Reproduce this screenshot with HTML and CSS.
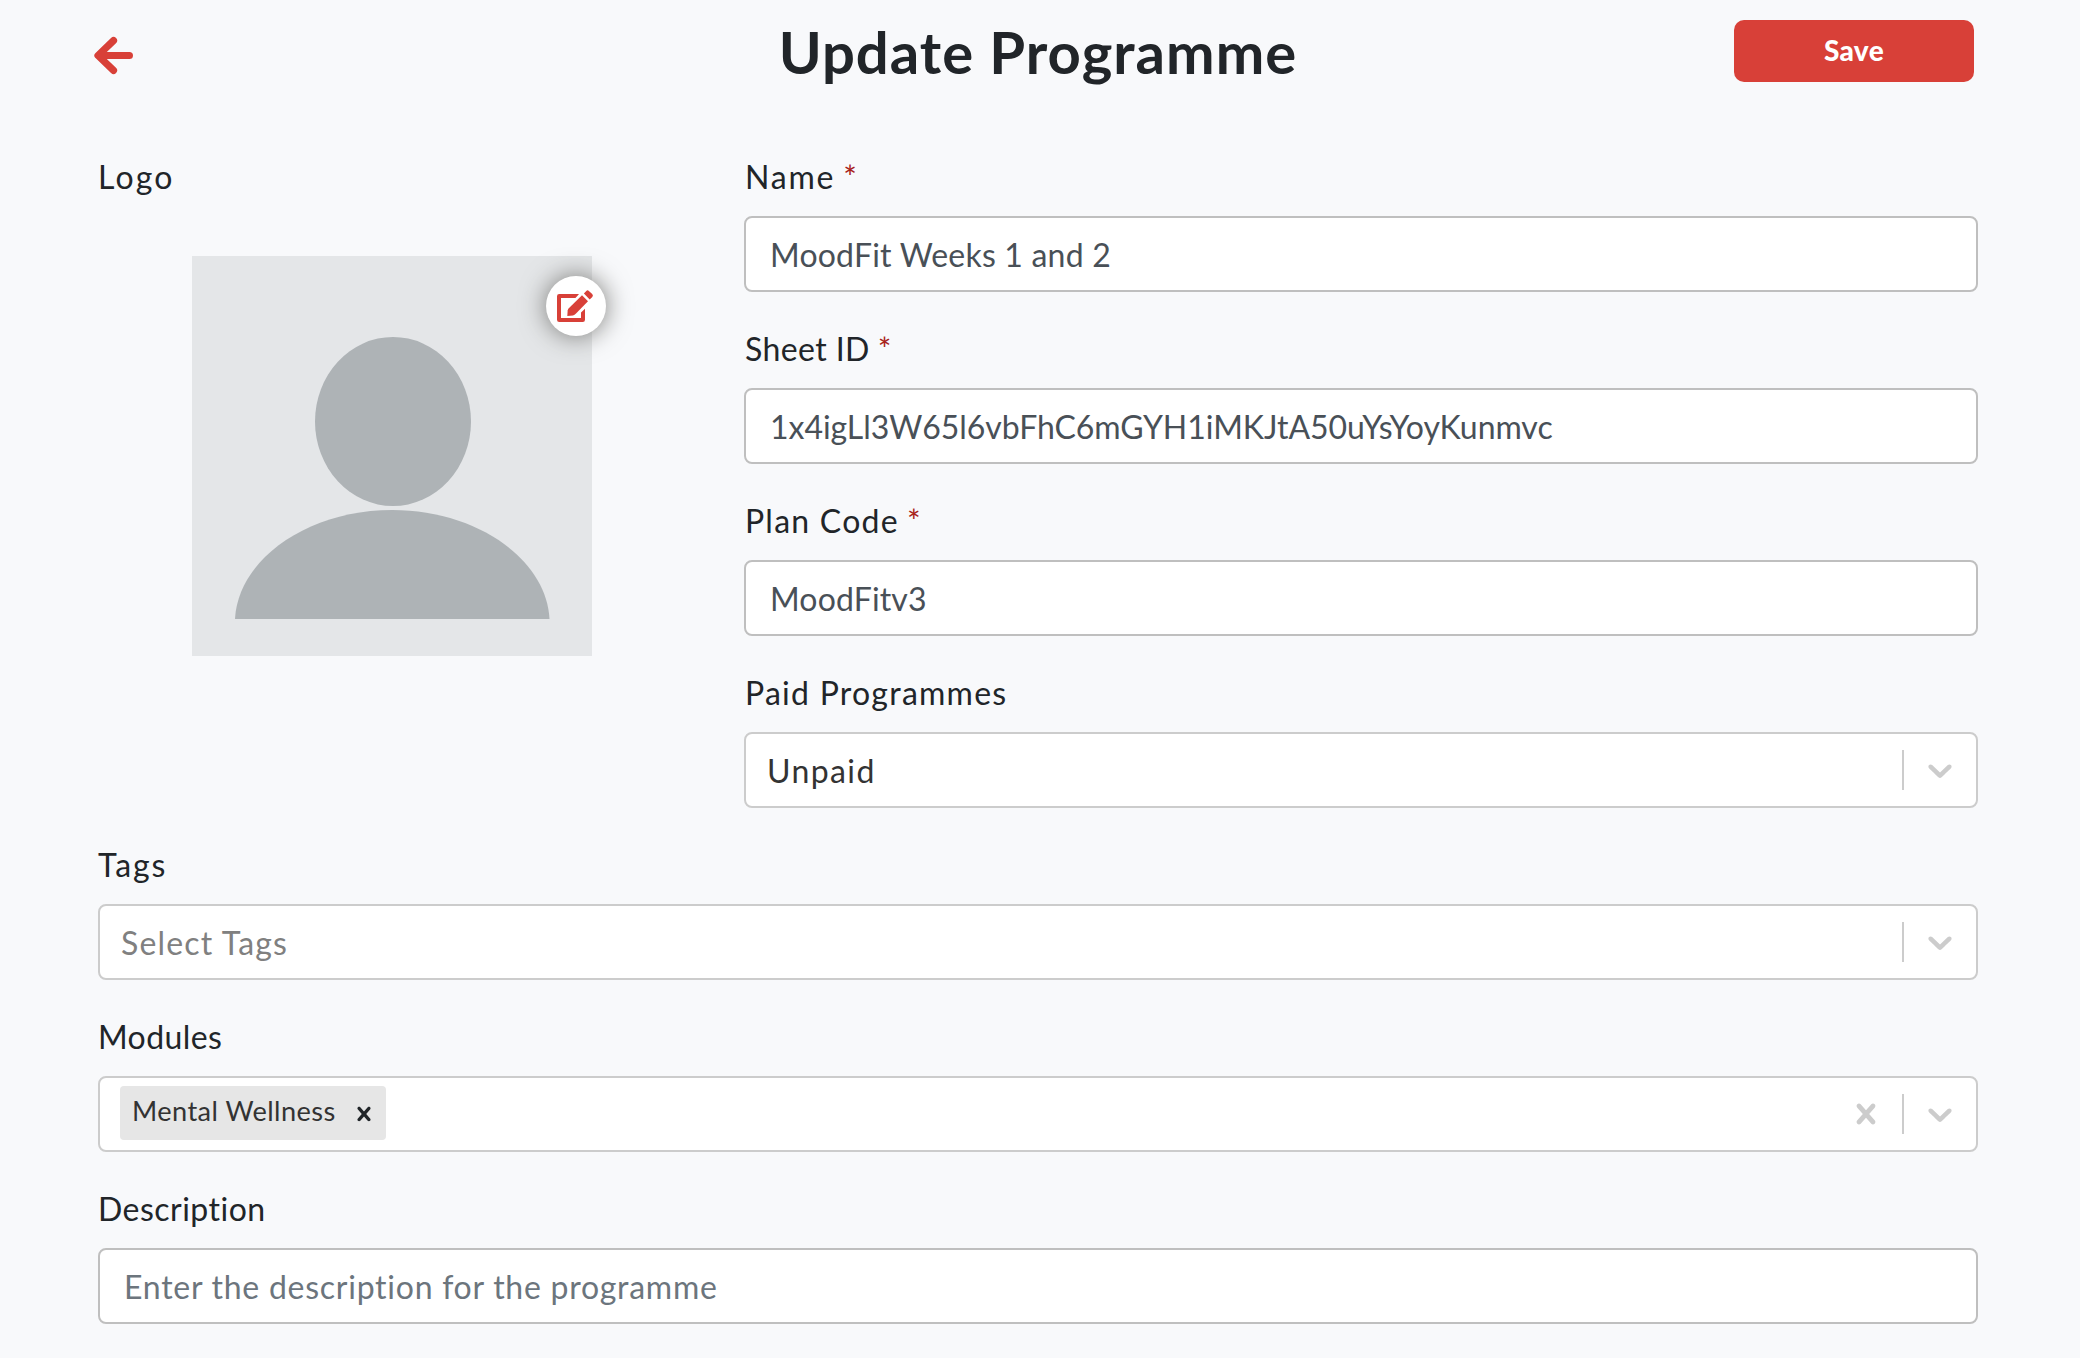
FILE: index.html
```html
<!DOCTYPE html>
<html lang="en">
<head>
<meta charset="utf-8">
<title>Update Programme</title>
<link rel="stylesheet" href="styles.css">
</head>
<body>
<header class="header">
  <a class="back" aria-label="Back">
    <svg width="42" height="40" viewBox="0 0 42 40" fill="none" stroke="currentColor" stroke-width="7.2" stroke-linecap="round" stroke-linejoin="round"><path d="M21.500 5.600 6 20.500 21.500 35.400M8 20.500H37.400"/></svg>
  </a>
  <h1 class="title">Update Programme</h1>
  <button class="save" type="button">Save</button>
</header>

<form class="form">
  <div class="top">
    <section class="logo">
      <label class="label label-logo">Logo</label>
      <div class="avatar">
        <svg class="avatar-figure" width="400" height="400" viewBox="0 0 400 400" fill="#aeb3b6">
          <ellipse cx="201" cy="165.500" rx="78" ry="84.500"/>
          <path d="M43 363C46 303 116 254 200.300 254S354.500 303 357.500 363Z"/>
        </svg>
        <button class="edit" type="button" aria-label="Edit logo">
          <svg width="36" height="32" viewBox="0 0 36 32" fill="currentColor">
            <path d="M22 4H2.200Q0 4 0 6.200V29.800Q0 32 2.200 32H25.800Q28 32 28 29.800V18.700L24 22.500V28H4V8H18.400L20.300 6Z"/>
            <path d="M25 5.200 31 11.200 19 23.600Q17.600 25 16 25.400L10.300 25.900 10.700 20.200Q10.900 19.200 11.800 18.300Z"/>
            <path d="M26.900 3.400 29.300.9Q30.500-.4 31.900.9L35.200 4.100Q36.600 5.500 35.300 6.900L32.700 9.600Z"/>
          </svg>
        </button>
      </div>
    </section>

    <div class="fields">
      <div class="field">
        <label class="label label-name" for="name">Name<span class="required">*</span></label>
        <input class="input input-name" id="name" value="MoodFit Weeks 1 and 2">
      </div>
      <div class="field">
        <label class="label label-sheet" for="sheet">Sheet ID<span class="required">*</span></label>
        <input class="input input-sheet" id="sheet" value="1x4igLl3W65l6vbFhC6mGYH1iMKJtA50uYsYoyKunmvc">
      </div>
      <div class="field">
        <label class="label label-plan" for="plan">Plan Code<span class="required">*</span></label>
        <input class="input input-plan" id="plan" value="MoodFitv3">
      </div>
      <div class="field">
        <label class="label label-paid">Paid Programmes</label>
        <div class="select">
          <span class="select-value">Unpaid</span>
          <span class="separator"></span>
          <svg class="indicator" viewBox="0 0 20 20"><path d="M4.516 7.548c0.436-0.446 1.043-0.481 1.576 0l3.908 3.747 3.908-3.747c0.533-0.481 1.141-0.446 1.574 0 0.436 0.445 0.408 1.197 0 1.615-0.406 0.418-4.695 4.502-4.695 4.502-0.217 0.223-0.502 0.335-0.787 0.335s-0.570-0.112-0.789-0.335c0 0-4.287-4.084-4.695-4.502s-0.436-1.170 0-1.615z"/></svg>
        </div>
      </div>
    </div>
  </div>

  <div class="field">
    <label class="label label-tags">Tags</label>
    <div class="select">
      <span class="select-placeholder">Select Tags</span>
      <span class="separator"></span>
      <svg class="indicator" viewBox="0 0 20 20"><path d="M4.516 7.548c0.436-0.446 1.043-0.481 1.576 0l3.908 3.747 3.908-3.747c0.533-0.481 1.141-0.446 1.574 0 0.436 0.445 0.408 1.197 0 1.615-0.406 0.418-4.695 4.502-4.695 4.502-0.217 0.223-0.502 0.335-0.787 0.335s-0.570-0.112-0.789-0.335c0 0-4.287-4.084-4.695-4.502s-0.436-1.170 0-1.615z"/></svg>
    </div>
  </div>

  <div class="field">
    <label class="label label-modules">Modules</label>
    <div class="select">
      <div class="chips">
        <div class="chip">
          <span class="chip-text">Mental Wellness</span>
          <svg class="chip-remove" viewBox="0 0 20 20"><path d="M14.348 14.849c-0.469 0.469-1.229 0.469-1.697 0l-2.651-3.030-2.651 3.029c-0.469 0.469-1.229 0.469-1.697 0-0.469-0.469-0.469-1.229 0-1.697l2.758-3.150-2.759-3.152c-0.469-0.469-0.469-1.228 0-1.697s1.228-0.469 1.697 0l2.652 3.031 2.651-3.031c0.469-0.469 1.228-0.469 1.697 0s0.469 1.229 0 1.697l-2.758 3.152 2.758 3.150c0.469 0.469 0.469 1.229 0 1.698z"/></svg>
        </div>
      </div>
      <svg class="indicator" viewBox="0 0 20 20"><path d="M14.348 14.849c-0.469 0.469-1.229 0.469-1.697 0l-2.651-3.030-2.651 3.029c-0.469 0.469-1.229 0.469-1.697 0-0.469-0.469-0.469-1.229 0-1.697l2.758-3.150-2.759-3.152c-0.469-0.469-0.469-1.228 0-1.697s1.228-0.469 1.697 0l2.652 3.031 2.651-3.031c0.469-0.469 1.228-0.469 1.697 0s0.469 1.229 0 1.697l-2.758 3.152 2.758 3.150c0.469 0.469 0.469 1.229 0 1.698z"/></svg>
      <span class="separator"></span>
      <svg class="indicator" viewBox="0 0 20 20"><path d="M4.516 7.548c0.436-0.446 1.043-0.481 1.576 0l3.908 3.747 3.908-3.747c0.533-0.481 1.141-0.446 1.574 0 0.436 0.445 0.408 1.197 0 1.615-0.406 0.418-4.695 4.502-4.695 4.502-0.217 0.223-0.502 0.335-0.787 0.335s-0.570-0.112-0.789-0.335c0 0-4.287-4.084-4.695-4.502s-0.436-1.170 0-1.615z"/></svg>
    </div>
  </div>

  <div class="field">
    <label class="label label-description" for="description">Description</label>
    <input class="input" id="description" placeholder="Enter the description for the programme">
  </div>
</form>
</body>
</html>
```
FILE: styles.css
```css
* {
  box-sizing: border-box;
}

body {
  margin: 0;
  background: #f8f9fb;
  color: #212529;
  font: 400 32px/48px Lato, sans-serif;
}

/* Header */
.header {
  display: grid;
  grid-template-columns: 1fr auto 1fr;
  align-items: start;
  height: 152px;
  padding: 17px 106px 0 102px;
}

.back {
  display: flex;
  margin: 18px 0 0 -10px;
  color: #d84038;
}

.title {
  margin: 0;
  font-size: 58px;
  font-weight: 700;
  line-height: 70px;
  letter-spacing: 1.02px;
}

.save {
  justify-self: end;
  width: 240px;
  height: 62px;
  margin-top: 3px;
  padding: 0 0 2px;
  border: 0;
  border-radius: 10px;
  background: #d84038;
  color: #fff;
  font: 900 28px/60px Lato, sans-serif;
  letter-spacing: 0.3px;
}

/* Form */
.form {
  display: flex;
  flex-direction: column;
  gap: 32px;
  padding: 0 102px 34px 98px;
}

.top {
  display: grid;
  grid-template-columns: 588px 1fr;
  gap: 58px;
}

.fields {
  display: flex;
  flex-direction: column;
  gap: 32px;
}

.field {
  display: flex;
  flex-direction: column;
  gap: 16px;
}

.label {
  display: block;
  height: 48px;
  padding-top: 1px;
}

.fields .label {
  padding-left: 1px;
}

.label-logo { letter-spacing: 2.2px; }
.label-name { letter-spacing: 1.8px; }
.label-sheet { letter-spacing: 0.4px; }
.label-plan { letter-spacing: 1.25px; }
.label-paid { letter-spacing: 1.25px; }
.label-tags { letter-spacing: 1.9px; }
.label-modules { letter-spacing: 0.4px; }
.label-description { letter-spacing: 0.48px; }

.required {
  margin-left: 8px;
  color: #a8221a;
}

/* Logo picker */
.avatar {
  position: relative;
  width: 400px;
  height: 400px;
  margin: 56px auto 0;
  background: #e4e6e8;
}

.avatar-figure {
  display: block;
}

.edit {
  position: absolute;
  top: 20px;
  left: 354px;
  display: flex;
  align-items: center;
  justify-content: center;
  width: 60px;
  height: 60px;
  padding: 0 2px 0 0;
  border: 0;
  border-radius: 50%;
  background: #fff;
  box-shadow: 0 0 26px #777774;
  color: #d84038;
}

.edit svg {
  overflow: visible;
}

/* Controls */
.input {
  width: 100%;
  height: 76px;
  padding: 0 24px;
  border: 2px solid #bfbfbf;
  border-radius: 8px;
  background: #fff;
  color: #495057;
  font: inherit;
}

.input-name { letter-spacing: 0.2px; }
.input-sheet { letter-spacing: -0.05px; }
.input-plan { letter-spacing: 0.14px; }

.input::placeholder {
  color: #6c757d;
  letter-spacing: 0.74px;
  opacity: 1;
}

.select {
  display: flex;
  align-items: center;
  gap: 16px;
  height: 76px;
  padding: 0 16px 0 20px;
  border: 2px solid #ccc;
  border-radius: 8px;
  background: #fff;
}

.select-value,
.select-placeholder,
.chips {
  flex: 1;
}

.select-value,
.select-placeholder {
  padding: 2px 0 0 1px;
}

.select-value {
  color: #333;
  letter-spacing: 1.4px;
}

.select-placeholder {
  color: #808080;
  letter-spacing: 1.17px;
}

.separator {
  width: 2px;
  height: 40px;
  background: #ccc;
}

.indicator {
  width: 40px;
  height: 40px;
  fill: #ccc;
}

.chip {
  display: flex;
  align-items: center;
  width: 266px;
  height: 54px;
  margin-bottom: 2px;
  padding: 0 8px 0 12px;
  border-radius: 4px;
  background: #e6e6e6;
}

.chip-text {
  flex: 1;
  padding-bottom: 4px;
  color: #333;
  font-size: 27.2px;
  letter-spacing: 0.43px;
}

.chip-remove {
  width: 28px;
  height: 28px;
  margin-top: 2px;
  fill: #212529;
}
```
